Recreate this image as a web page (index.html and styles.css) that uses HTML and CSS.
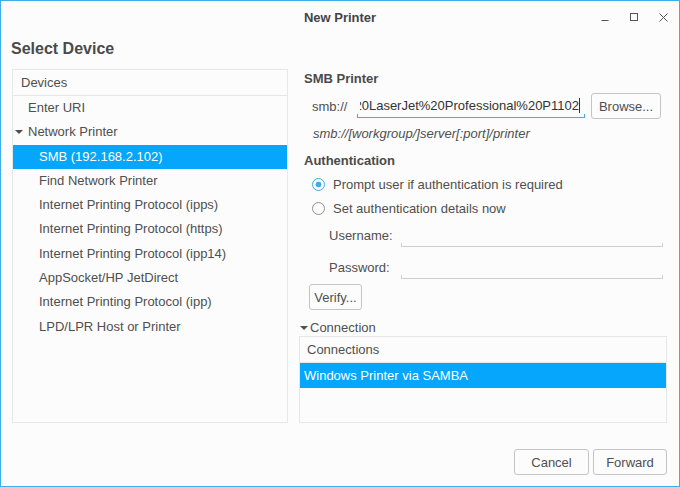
FILE: index.html
```html
<!DOCTYPE html>
<html>
<head>
<meta charset="utf-8">
<link rel="stylesheet" href="styles.css">
</head>
<body>
<div class="window">
  <header class="titlebar">
    <div></div>
    <div class="title">New Printer</div>
    <div class="controls">
      <svg width="8" height="8" viewBox="0 0 8 8"><path d="M0.5 7.5H7.5" stroke="#555" stroke-width="1"/></svg>
      <svg width="8" height="8" viewBox="0 0 8 8"><rect x="0.5" y="0.5" width="7" height="7" fill="none" stroke="#555" stroke-width="1"/></svg>
      <svg width="9" height="9" viewBox="0 0 9 9"><path d="M0.5 0.5L8.5 8.5M8.5 0.5L0.5 8.5" stroke="#555" stroke-width="1"/></svg>
    </div>
  </header>
  <h1 class="heading">Select Device</h1>
  <div class="main">
    <div class="tree">
      <div class="tree-header">Devices</div>
      <div class="row lvl1">Enter URI</div>
      <div class="row lvl0"><span class="tri"></span>Network Printer</div>
      <div class="row lvl2 selected">SMB (192.168.2.102)</div>
      <div class="row lvl2">Find Network Printer</div>
      <div class="row lvl2">Internet Printing Protocol (ipps)</div>
      <div class="row lvl2">Internet Printing Protocol (https)</div>
      <div class="row lvl2">Internet Printing Protocol (ipp14)</div>
      <div class="row lvl2">AppSocket/HP JetDirect</div>
      <div class="row lvl2">Internet Printing Protocol (ipp)</div>
      <div class="row lvl2">LPD/LPR Host or Printer</div>
    </div>
    <div class="panel">
      <div class="section-title">SMB Printer</div>
      <div class="uri-row">
        <span class="uri-label">smb://</span>
        <div class="entry active"><div class="entry-clip"><span class="entry-text">%20LaserJet%20Professional%20P1102</span></div><span class="cursor"></span></div>
        <button class="btn browse">Browse...</button>
      </div>
      <div class="hint">smb://[workgroup/]server[:port]/printer</div>
      <div class="section-title auth">Authentication</div>
      <div class="radio-row first"><span class="radio checked"></span>Prompt user if authentication is required</div>
      <div class="radio-row"><span class="radio"></span>Set authentication details now</div>
      <div class="field-row user"><span class="field-label">Username:</span><div class="entry plain"></div></div>
      <div class="field-row pass"><span class="field-label">Password:</span><div class="entry plain"></div></div>
      <div class="verify-row"><button class="btn verify">Verify...</button></div>
      <div class="expander"><span class="tri"></span>Connection</div>
      <div class="conn-box">
        <div class="conn-header">Connections</div>
        <div class="conn-row selected">Windows Printer via SAMBA</div>
      </div>
    </div>
  </div>
  <footer class="footer">
    <button class="btn dlg">Cancel</button>
    <button class="btn dlg">Forward</button>
  </footer>
</div>
</body>
</html>
```

FILE: styles.css
```css
* { box-sizing: border-box; }
html, body { margin: 0; padding: 0; }
body {
  font-family: "Liberation Sans", Arial, sans-serif;
  font-size: 13px;
  color: #4f4f4f;
  background: #fcfcfc;
}
.window {
  width: 680px;
  height: 487px;
  border: 1px solid #3daee9;
  background: #fcfcfc;
  display: flex;
  flex-direction: column;
}
.titlebar {
  height: 31px;
  display: grid;
  grid-template-columns: 1fr auto 1fr;
  align-items: center;
}
.title {
  font-weight: bold;
  color: #444;
  font-size: 13px;
  padding-top: 1px;
}
.controls {
  justify-self: end;
  display: flex;
  align-items: center;
  gap: 21px;
  padding-right: 11px;
  padding-top: 1px;
}
.controls svg { display: block; }
.heading {
  margin: 0;
  font-size: 16px;
  font-weight: bold;
  color: #4a4a4a;
  line-height: 22px;
  padding: 6px 0 0 10px;
  height: 37px;
}
.main {
  display: flex;
  height: 354px;
}
.tree {
  margin-left: 11px;
  width: 276px;
  border: 1px solid #e8e8e8;
  background: #fcfcfc;
}
.tree-header {
  height: 26px;
  line-height: 25px;
  padding-left: 8px;
  border-bottom: 1px solid #e6e6e6;
}
.row {
  height: 24.3px;
  line-height: 24.3px;
  white-space: nowrap;
}
.lvl0 { padding-left: 2px; display: flex; align-items: center; }
.lvl1 { padding-left: 15px; }
.lvl2 { padding-left: 26px; }
.row.selected { background: #05a6fb; color: #fff; }
.tri {
  display: inline-block;
  width: 0;
  height: 0;
  border-left: 4px solid transparent;
  border-right: 4px solid transparent;
  border-top: 4px solid #4f4f4f;
  margin-right: 5px;
}
.panel {
  margin-left: 11px;
  width: 368px;
  display: flex;
  flex-direction: column;
}
.section-title {
  font-weight: bold;
  height: 20px;
  line-height: 20px;
  padding-left: 5px;
  color: #4a4a4a;
}
.uri-row {
  margin-top: 4px;
  height: 26px;
  display: flex;
  align-items: center;
}
.uri-label { width: 58px; padding-left: 13px; }
.entry {
  height: 24px;
  align-self: flex-end;
  border-bottom: 1px solid #cfcfcf;
  background:
    linear-gradient(#cfcfcf, #cfcfcf) left bottom / 1px 3px no-repeat,
    linear-gradient(#cfcfcf, #cfcfcf) right bottom / 1px 3px no-repeat;
}
.entry.active {
  width: 228px;
  margin-bottom: 1px;
  border-bottom-color: #3daee9;
  background:
    linear-gradient(#3daee9, #3daee9) left bottom / 1px 3px no-repeat,
    linear-gradient(#3daee9, #3daee9) right bottom / 1px 3px no-repeat;
  display: flex;
  align-items: center;
  padding: 0 5px 0 3px;
  color: #333;
}
.entry-clip {
  flex: 1;
  min-width: 0;
  overflow: hidden;
  display: flex;
  justify-content: flex-end;
  white-space: nowrap;
}
.entry-text { flex: none; }
.cursor {
  flex: none;
  width: 1px;
  height: 15px;
  background: #333;
}
.btn {
  font-family: inherit;
  font-size: 13px;
  color: #4f4f4f;
  background: #fcfcfc;
  border: 1px solid #c4c4c4;
  border-radius: 3px;
  height: 26px;
  padding: 0;
  margin: 0;
}
.browse { width: 70px; margin-left: 6px; }
.hint {
  margin-top: 3px;
  height: 24px;
  line-height: 24px;
  padding-left: 14px;
  font-style: italic;
}
.section-title.auth { margin-top: 5px; }
.radio-row {
  height: 24px;
  display: flex;
  align-items: center;
  padding-left: 13px;
}
.radio-row.first { margin-top: 1px; }
.radio {
  width: 13px;
  height: 13px;
  border-radius: 50%;
  border: 1px solid #8f8f8f;
  margin-right: 8px;
  flex: none;
  background: #fcfcfc;
}
.radio.checked {
  border-color: #3daee9;
  background: radial-gradient(circle, #3daee9 0 2.6px, #fcfcfc 3.2px);
}
.field-row {
  height: 24px;
  display: flex;
  align-items: center;
  padding-left: 30px;
}
.field-row.user { margin-top: 3px; }
.field-row.pass { margin-top: 8px; }
.field-label { width: 72px; }
.entry.plain { width: 262px; height: 24px; }
.verify-row { margin-top: 5px; padding-left: 10px; }
.verify { width: 53px; }
.expander {
  margin-top: 8px;
  height: 19px;
  line-height: 19px;
  display: flex;
  align-items: center;
  padding-left: 1px;
}
.expander .tri { margin-right: 2px; }
.conn-box {
  height: 87px;
  margin-top: -1px;
  border: 1px solid #e6e6e6;
}
.conn-header {
  height: 26px;
  line-height: 26px;
  padding-left: 7px;
  border-bottom: 1px solid #e6e6e6;
}
.conn-row {
  height: 25px;
  line-height: 25px;
  padding-left: 4px;
}
.conn-row.selected { background: #05a6fb; color: #fff; }
.footer {
  flex: 1;
  display: flex;
  justify-content: flex-end;
  align-items: flex-start;
  gap: 4px;
  padding: 26px 12px 0 0;
}
.dlg { width: 75px; }
.dlg + .dlg { width: 74px; }
```
